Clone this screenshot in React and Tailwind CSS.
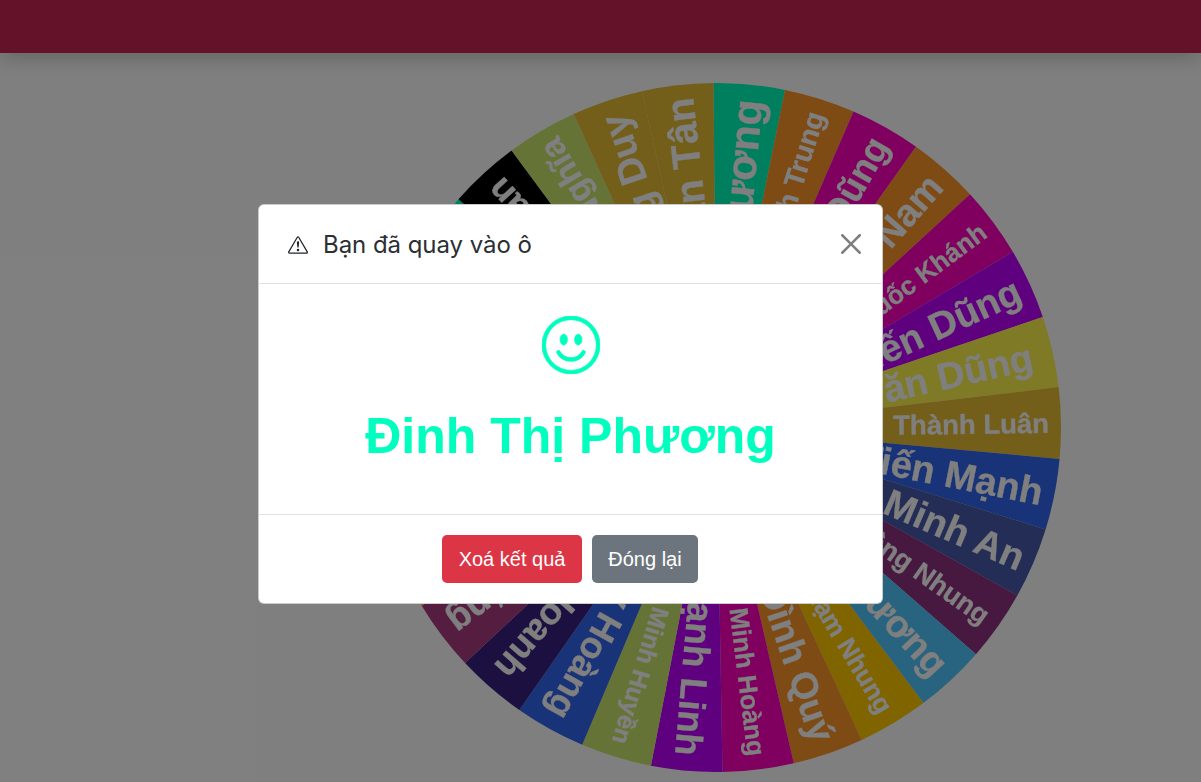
import React from "react";

const segs = [
  ["#00ffbf", "Phương", 42, 15],
  ["#ff9628", "Minh Trung", 28, 14],
  ["#ff00bf", "Văn Dũng", 37, 14],
  ["#ff9628", "Văn Nam", 38, 14],
  ["#ff00bf", "Quốc Khánh", 26, 12],
  ["#bf00ff", "Tiến Dũng", 38, 12],
  ["#fff44a", "Văn Dũng", 38, 21],
  ["#e6bf33", "Thành Luân", 27.5, 12],
  ["#3366f0", "Tiến Mạnh", 38, 12],
  ["#465aaa", "Minh An", 38, 11],
  ["#903280", "Hồng Nhung", 27, 14],
  ["#50c8ff", "Phương", 38, 14],
  ["#ffc800", "Phạm Nhung", 26, 14],
  ["#ff9628", "Đình Quý", 37, 14],
  ["#ff00bf", "Minh Hoàng", 26, 14],
  ["#bf00ff", "Mạnh Linh", 37, 15],
  ["#cde66e", "Minh Huyền", 25, 14],
  ["#3366f0", "Huy Hoàng", 37, 14],
  ["#382080", "Hoanh", 37, 18],
  ["#aa3c82", "Dũng", 37, 14],
  ["#ffc800", "", 30, 14],
  ["#3366f0", "", 30, 14],
  ["#ff9628", "", 30, 14],
  ["#bf00ff", "", 30, 14],
  ["#50c8ff", "", 30, 14],
  ["#00ffbf", "", 30, 14],
  ["#000000", "Tuấn", 36, 14],
  ["#cde66e", "Nghĩa", 34, 12],
  ["#e6bf33", "Hoàng Duy", 38, 16],
  ["#e6bf33", "Văn Tân", 40, 13],
];

const R = 344.5;
const START = -90.5;

// Slice edges: the visible right and bottom run slightly tighter than 12 degrees.
function edge(i) {
  return i <= 20 ? START + i * 11.967 : START + 360 - (30 - i) * 12;
}

function pt(deg) {
  const a = (deg * Math.PI) / 180;
  return `${(R * Math.cos(a)).toFixed(2)} ${(R * Math.sin(a)).toFixed(2)}`;
}

function Wheel() {
  return (
    <svg
      viewBox="-344.5 -344.5 689 689"
      className="block w-[689px] h-[689px] shrink-0 mt-[30px] ml-[372px] blur-[0.4px] font-['Liberation_Sans',Arial,sans-serif] font-bold"
    >
      {segs.map(([color], i) => (
        <path key={i} d={`M0 0L${pt(edge(i))}A${R} ${R} 0 0 1 ${pt(edge(i + 1))}Z`} fill={color} />
      ))}
      {segs.map(([, name, size, margin], i) =>
        name ? (
          <text
            key={i}
            transform={`rotate(${(edge(i) + edge(i + 1)) / 2})`}
            x={R - margin}
            y={size * 0.35}
            textAnchor="end"
            fontSize={size}
            fill="#fff"
            stroke="#fff"
            strokeWidth="0.3"
          >
            {name}
          </text>
        ) : null
      )}
    </svg>
  );
}

export default function App() {
  return (
    <div className="relative h-[782px] overflow-hidden bg-white font-['Liberation_Sans',Arial,sans-serif]">
      <div className="relative z-10 h-[53px] bg-[#c82454] shadow-[0_6px_20px_rgba(0,0,0,0.2)]" />
      <Wheel />
      <div className="absolute inset-0 z-20 bg-black/50 pl-[258px] pt-[204px]">
        <div className="w-[625px] h-[400px] flex flex-col bg-white rounded-[6px] border border-black/20">
          <div className="h-[79px] shrink-0 flex items-center pl-[29px] pr-[21px] border-b border-[#dee2e6]">
            <svg viewBox="0 0 16 16" fill="#212529" className="w-[20px] h-[20px] shrink-0 mt-[2px]">
              <path d="M7.938 2.016A.13.13 0 0 1 8.002 2a.13.13 0 0 1 .063.016.146.146 0 0 1 .054.057l6.857 11.667c.036.06.035.124.002.183a.163.163 0 0 1-.054.06.116.116 0 0 1-.066.017H1.146a.115.115 0 0 1-.066-.017.163.163 0 0 1-.054-.06.176.176 0 0 1 .002-.183L7.884 2.073a.147.147 0 0 1 .054-.057zm1.044-.45a1.13 1.13 0 0 0-1.96 0L.165 13.233c-.457.778.091 1.767.98 1.767h13.713c.889 0 1.438-.99.98-1.767L8.982 1.566z" />
              <path d="M7.002 12a1 1 0 1 1 2 0 1 1 0 0 1-2 0zM7.1 5.995a.905.905 0 1 1 1.8 0l-.35 3.507a.552.552 0 0 1-1.1 0L7.1 5.995z" />
            </svg>
            <h5 className="ml-[15px] text-[24px] leading-[29px] text-[#2b3035] font-['Inter',sans-serif] font-normal tracking-[-0.05px]">Bạn đã quay vào ô</h5>
            <svg viewBox="0 0 16 16" fill="#000" className="ml-auto w-[20px] h-[20px] opacity-50">
              <path d="M.293.293a1 1 0 011.414 0L8 6.586 14.293.293a1 1 0 111.414 1.414L9.414 8l6.293 6.293a1 1 0 01-1.414 1.414L8 9.414l-6.293 6.293a1 1 0 01-1.414-1.414L6.586 8 .293 1.707a1 1 0 010-1.414z" />
            </svg>
          </div>
          <div className="flex-1 flex flex-col items-center pt-[32px]">
            <svg viewBox="0 0 16 16" fill="#00ffbf" stroke="#00ffbf" strokeWidth="0.22" className="w-[58px] h-[58px]">
              <path d="M8 15A7 7 0 1 1 8 1a7 7 0 0 1 0 14zm0 1A8 8 0 1 0 8 0a8 8 0 0 0 0 16z" />
              <path d="M4.285 9.567a.5.5 0 0 1 .683.183A3.498 3.498 0 0 0 8 11.5a3.498 3.498 0 0 0 3.032-1.75.5.5 0 1 1 .866.5A4.498 4.498 0 0 1 8 12.5a4.498 4.498 0 0 1-3.898-2.25.5.5 0 0 1 .183-.683zM7 6.5C7 7.328 6.552 8 6 8s-1-.672-1-1.5S5.448 5 6 5s1 .672 1 1.5zm4 0c0 .828-.448 1.5-1 1.5s-1-.672-1-1.5S9.448 5 10 5s1 .672 1 1.5z" />
            </svg>
            <p className="mt-[32px] text-[50px] leading-[60px] font-bold text-[#00ffbf]">Đinh Thị Phương</p>
          </div>
          <div className="h-[89px] shrink-0 flex items-center justify-center gap-[10px] pr-[1px] border-t border-[#dee2e6] text-white text-[20px]">
            <button className="w-[140px] h-[48px] rounded-[5px] bg-[#dc3545]">Xoá kết quả</button>
            <button className="w-[106px] h-[48px] rounded-[5px] bg-[#6c757d]">Đóng lại</button>
          </div>
        </div>
      </div>
    </div>
  );
}
